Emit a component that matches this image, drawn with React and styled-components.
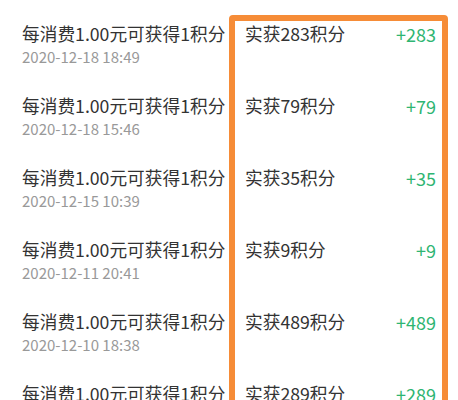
import styled, { createGlobalStyle } from 'styled-components';

const GlobalStyle = createGlobalStyle`
    body {
        margin: 0;
        background: #ffffff;
        font-family: "Noto Sans CJK SC", "Noto Sans", sans-serif;
    }
`;

const Page = styled.div`
    position: relative;
    width: 458px;
    height: 400px;
    overflow: hidden;
    background: #ffffff;
`;

const List = styled.div`
    display: flex;
    flex-direction: column;
    padding-top: 20px;
`;

const Row = styled.div`
    display: grid;
    grid-template-columns: 223px 1fr auto;
    align-items: start;
    height: 72px;
    padding: 0 22px;
    box-sizing: border-box;
`;

const Info = styled.div`
    display: flex;
    flex-direction: column;
`;

const Title = styled.div`
    font-size: 17.7px;
    line-height: 26px;
    color: #333333;
    white-space: nowrap;
`;

const Time = styled.div`
    font-size: 15px;
    line-height: 22px;
    color: #999999;
`;

const Earned = styled.div`
    font-size: 17.7px;
    line-height: 26px;
    color: #333333;
`;

const Amount = styled.div`
    font-size: 18px;
    line-height: 28px;
    color: #2eb572;
    text-align: right;
`;

const Highlight = styled.div`
    position: absolute;
    left: 229px;
    top: 15px;
    width: 219px;
    height: 420px;
    box-sizing: border-box;
    border: 6px solid #f68c37;
    border-radius: 4px;
    pointer-events: none;
`;

const records = [
    { time: '2020-12-18 18:49', points: 283 },
    { time: '2020-12-18 15:46', points: 79 },
    { time: '2020-12-15 10:39', points: 35 },
    { time: '2020-12-11 20:41', points: 9 },
    { time: '2020-12-10 18:38', points: 489 },
    { time: '2020-12-09 12:20', points: 289 },
];

const App = () => (
    <Page>
        <GlobalStyle />
        <List>
            {records.map((r, i) => (
                <Row key={i}>
                    <Info>
                        <Title>每消费1.00元可获得1积分</Title>
                        <Time>{r.time}</Time>
                    </Info>
                    <Earned>实获{r.points}积分</Earned>
                    <Amount>+{r.points}</Amount>
                </Row>
            ))}
        </List>
        <Highlight />
    </Page>
);

export default App;
